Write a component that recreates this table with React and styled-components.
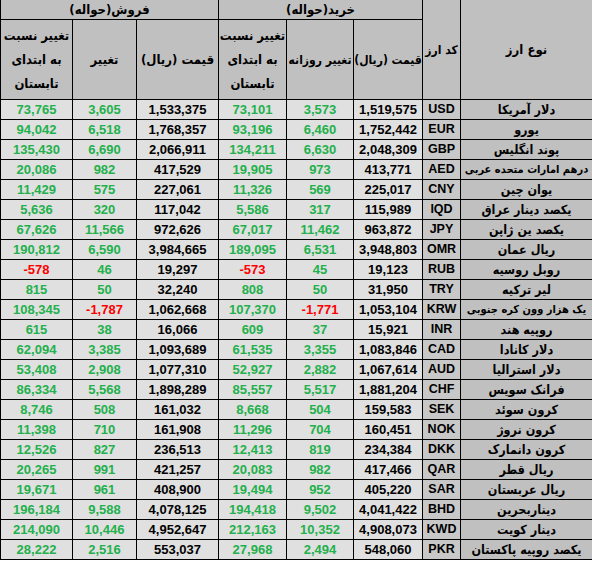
import React from 'react';
import styled, { createGlobalStyle } from 'styled-components';

const GlobalStyle = createGlobalStyle`
  html, body {
    margin: 0;
    padding: 0;
    background: #ffffff;
  }
`;

const rows = [
  ['دلار آمریکا', 'USD', '1,519,575', '3,573', '73,101', '1,533,375', '3,605', '73,765'],
  ['یورو', 'EUR', '1,752,442', '6,460', '93,196', '1,768,357', '6,518', '94,042'],
  ['پوند انگلیس', 'GBP', '2,048,309', '6,630', '134,211', '2,066,911', '6,690', '135,430'],
  ['درهم امارات متحده عربی', 'AED', '413,771', '973', '19,905', '417,529', '982', '20,086'],
  ['یوان چین', 'CNY', '225,017', '569', '11,326', '227,061', '575', '11,429'],
  ['یکصد دینار عراق', 'IQD', '115,989', '317', '5,586', '117,042', '320', '5,636'],
  ['یکصد ین ژاپن', 'JPY', '963,872', '11,462', '67,017', '972,626', '11,566', '67,626'],
  ['ریال عمان', 'OMR', '3,948,803', '6,531', '189,095', '3,984,665', '6,590', '190,812'],
  ['روبل روسیه', 'RUB', '19,123', '45', '-573', '19,297', '46', '-578'],
  ['لیر ترکیه', 'TRY', '31,950', '50', '808', '32,240', '50', '815'],
  ['یک هزار وون کره جنوبی', 'KRW', '1,053,104', '-1,771', '107,370', '1,062,668', '-1,787', '108,345'],
  ['روپیه هند', 'INR', '15,921', '37', '609', '16,066', '38', '615'],
  ['دلار کانادا', 'CAD', '1,083,846', '3,355', '61,535', '1,093,689', '3,385', '62,094'],
  ['دلار استرالیا', 'AUD', '1,067,614', '2,882', '52,927', '1,077,310', '2,908', '53,408'],
  ['فرانک سویس', 'CHF', '1,881,204', '5,517', '85,557', '1,898,289', '5,568', '86,334'],
  ['کرون سوئد', 'SEK', '159,583', '504', '8,668', '161,032', '508', '8,746'],
  ['کرون نروژ', 'NOK', '160,451', '704', '11,296', '161,908', '710', '11,398'],
  ['کرون دانمارک', 'DKK', '234,384', '819', '12,413', '236,513', '827', '12,526'],
  ['ریال قطر', 'QAR', '417,466', '982', '20,083', '421,257', '991', '20,265'],
  ['ریال عربستان', 'SAR', '405,220', '952', '19,494', '408,900', '961', '19,671'],
  ['دیناربحرین', 'BHD', '4,041,422', '9,502', '194,418', '4,078,125', '9,588', '196,184'],
  ['دینار کویت', 'KWD', '4,908,073', '10,352', '212,163', '4,952,647', '10,446', '214,090'],
  ['یکصد روپیه پاکستان', 'PKR', '548,060', '2,494', '27,968', '553,037', '2,516', '28,222'],
];

// widths from right to left
const widths = [132, 38, 69, 67, 68, 82, 64, 72];

const toneOf = (value, isPrice) => {
  if (isPrice) return 'price';
  return value.startsWith('-') ? 'down' : 'up';
};

const App = () => {
  return (
    <>
      <GlobalStyle />
      <Table dir="rtl">
        <colgroup>
          {widths.map((w, i) => (
            <col key={i} style={{ width: w }} />
          ))}
        </colgroup>
        <thead>
          <tr>
            <HeadCell rowSpan={2} $size={13}>نوع ارز</HeadCell>
            <HeadCell rowSpan={2}>کد ارز</HeadCell>
            <GroupCell colSpan={3}>خرید(حواله)</GroupCell>
            <GroupCell colSpan={3}>فروش(حواله)</GroupCell>
          </tr>
          <tr>
            <HeadCell>قیمت (ریال)</HeadCell>
            <HeadCell>تغییر روزانه</HeadCell>
            <HeadCell $size={13}>
              تغییر نسبت
              <br />
              به ابتدای
              <br />
              تابستان
            </HeadCell>
            <HeadCell $size={13}>قیمت (ریال)</HeadCell>
            <HeadCell $size={13}>تغییر</HeadCell>
            <HeadCell $size={13}>
              تغییر نسبت
              <br />
              به ابتدای
              <br />
              تابستان
            </HeadCell>
          </tr>
        </thead>
        <tbody>
          {rows.map(([name, code, ...values]) => (
            <tr key={code}>
              <NameCell $compact={name.length > 19}>{name}</NameCell>
              <CodeCell>{code}</CodeCell>
              {values.map((v, i) => (
                <NumCell key={i} dir="ltr" $tone={toneOf(v, i % 3 === 0)}>
                  {v}
                </NumCell>
              ))}
            </tr>
          ))}
        </tbody>
      </Table>
    </>
  );
};

export default App;

const persian = `'DejaVu Sans Condensed', 'DejaVu Sans', 'Liberation Sans', sans-serif`;

const Table = styled.table`
  width: 592px;
  table-layout: fixed;
  border-collapse: collapse;
  font-family: 'Liberation Sans', 'DejaVu Sans', sans-serif;
  font-weight: bold;
  color: #000;

  td,
  th {
    border: 1px solid #000;
    padding: 0;
    overflow: hidden;
    white-space: nowrap;
  }

  thead tr:first-child th {
    border-top: none;
  }
`;

const HeadCell = styled.th`
  background: #c0c0c0;
  font-family: ${persian};
  font-stretch: condensed;
  font-size: ${(p) => p.$size || 12}px;
  font-weight: bold;
  line-height: 24px;
  height: 79px;
  text-align: center;
  vertical-align: middle;
`;

const GroupCell = styled.th`
  background: #c0c0c0;
  font-family: ${persian};
  font-stretch: condensed;
  font-size: 13px;
  font-weight: bold;
  height: 19px;
  line-height: 19px;
  text-align: center;
`;

const NameCell = styled.td`
  background: #c0c0c0;
  font-family: ${persian};
  font-stretch: condensed;
  font-size: ${(p) => (p.$compact ? 11 : 12.5)}px;
  height: 19px;
  line-height: 19px;
  text-align: center;
`;

const CodeCell = styled.td`
  background: #c8c8c8;
  font-size: 12.5px;
  height: 19px;
  line-height: 19px;
  text-align: center;
`;

const toneColors = {
  price: '#000000',
  up: '#22b14c',
  down: '#ff0000',
};

const NumCell = styled.td`
  background: #e0e0e0;
  color: ${(p) => toneColors[p.$tone]};
  font-size: 13px;
  height: 19px;
  line-height: 19px;
  text-align: center;
`;
